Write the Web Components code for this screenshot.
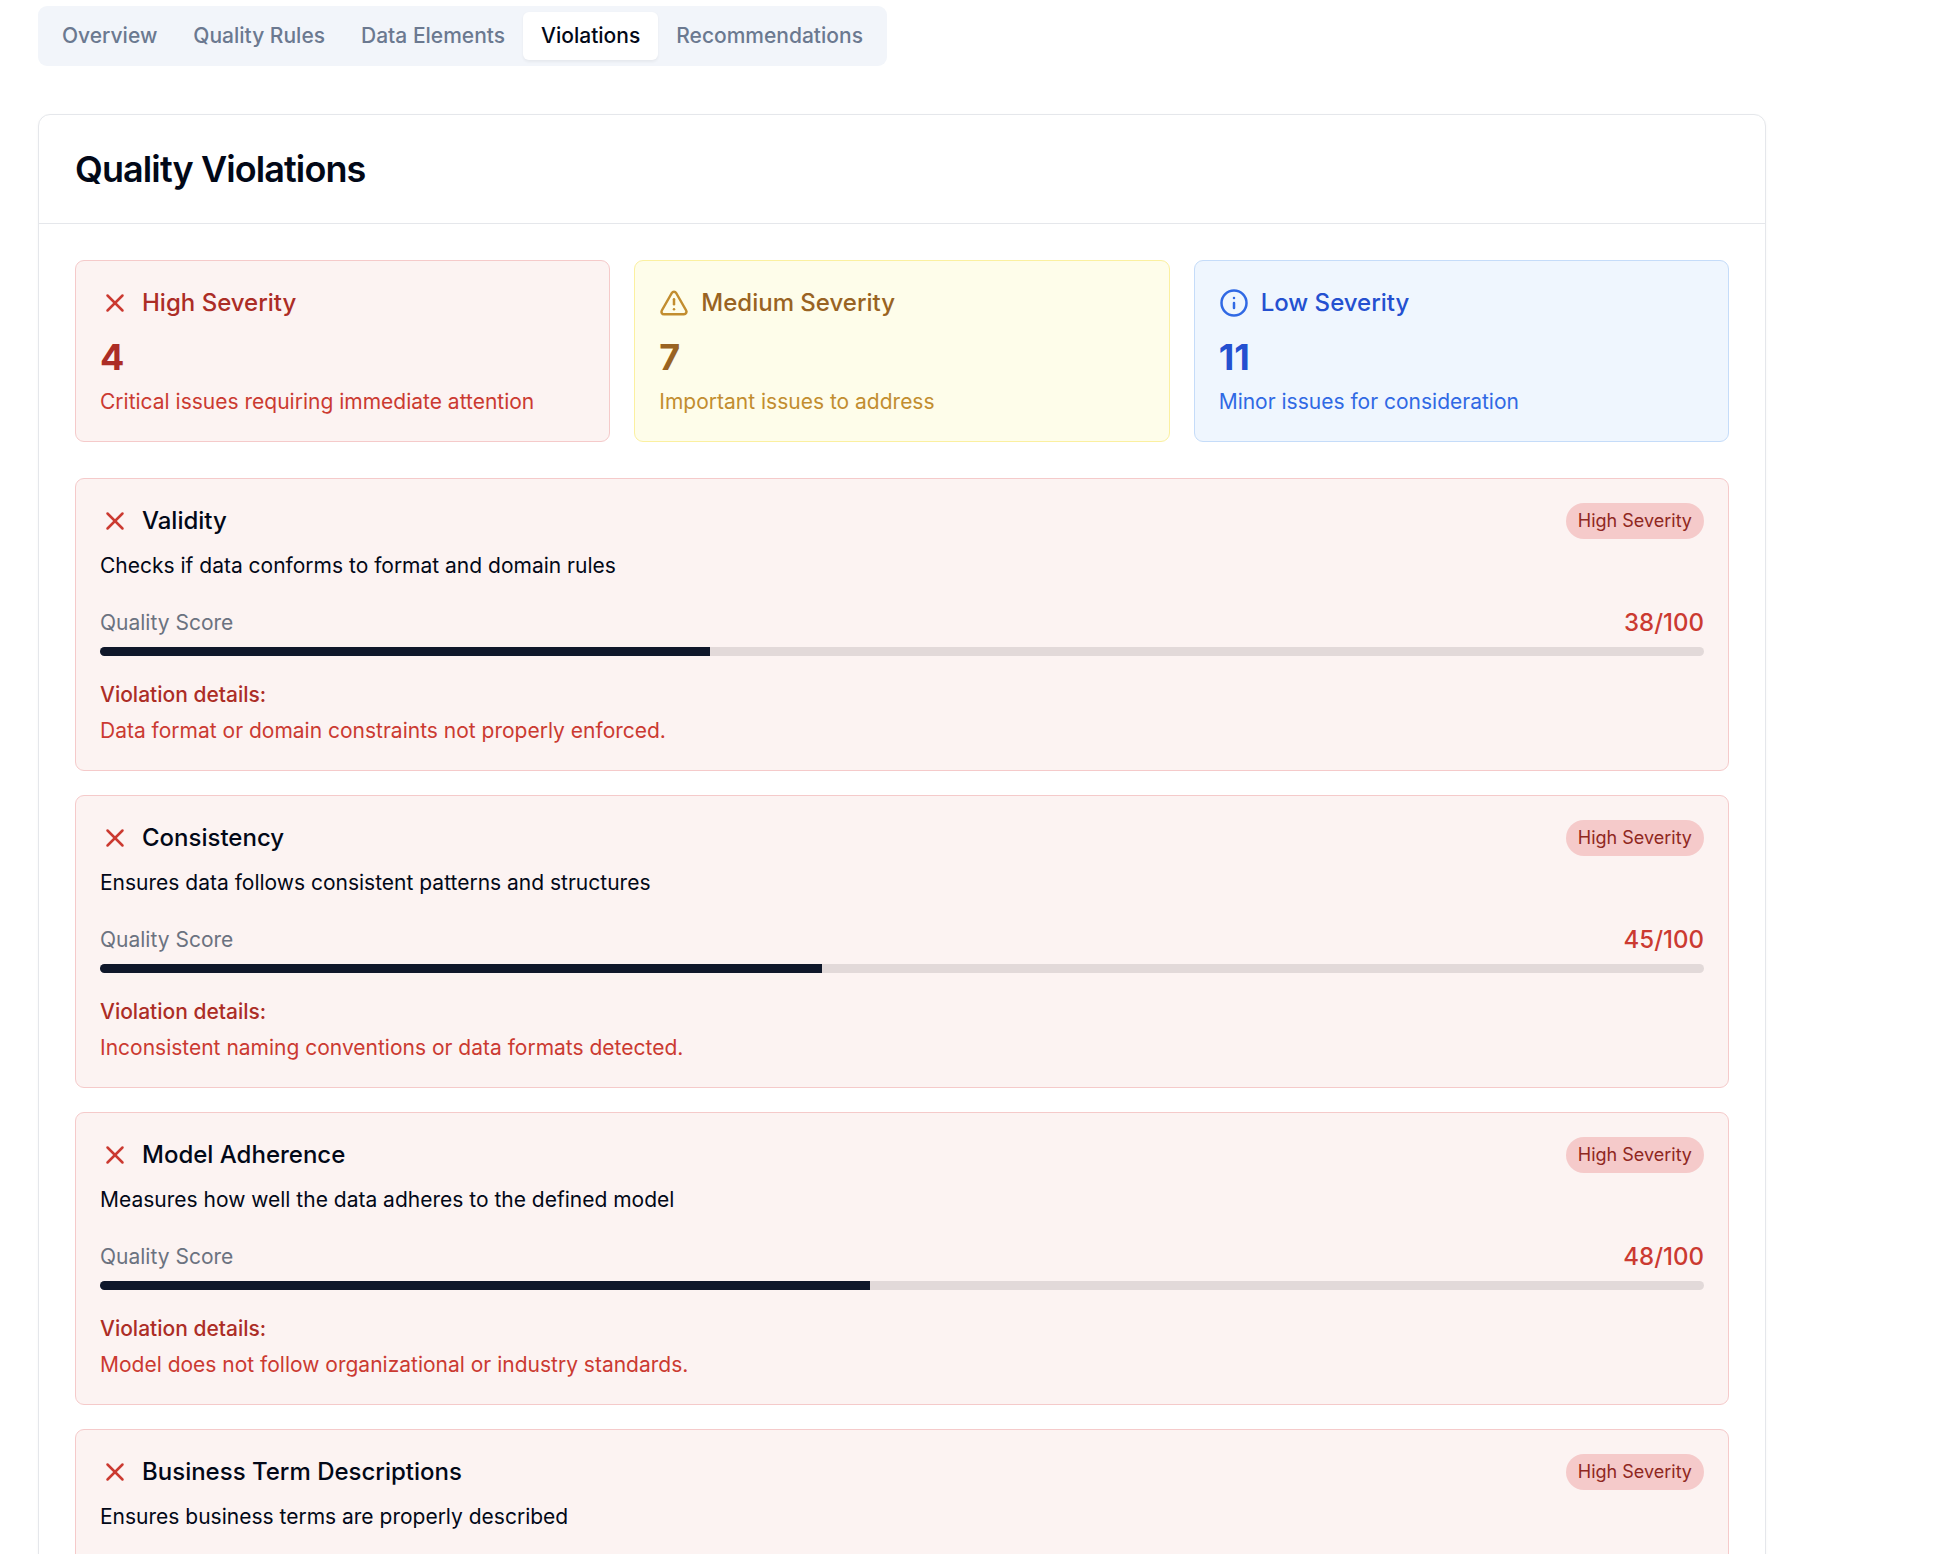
<!DOCTYPE html>
<html lang="en">
<head>
<meta charset="utf-8">
<title>Quality Violations</title>
<style>
html{overflow:hidden}
body{margin:0;background:#fff;color:#020817;font-family:Inter,"Liberation Sans",sans-serif;font-size:21px;line-height:30px;-webkit-font-smoothing:antialiased}
</style>
</head>
<body>
<quality-page></quality-page>
<script>
const define = (name, html, init) => {
  const tpl = document.createElement('template');
  tpl.innerHTML = html;
  customElements.define(name, class extends HTMLElement {
    connectedCallback() {
      if (this.shadowRoot) return;
      this.attachShadow({ mode: 'open' }).append(tpl.content.cloneNode(true));
      if (init) init(this, this.shadowRoot);
    }
  });
};

const ICONS = {
  high: '<path d="M18 6 6 18"/><path d="m6 6 12 12"/>',
  medium: '<path d="m21.73 18-8-14a2 2 0 0 0-3.48 0l-8 14A2 2 0 0 0 4 21h16a2 2 0 0 0 1.73-3Z"/><path d="M12 9v4"/><path d="M12 17h.01"/>',
  low: '<circle cx="12" cy="12" r="10"/><path d="M12 16v-4"/><path d="M12 8h.01"/>'
};

define('severity-icon', `<style>
:host{display:block;flex:none;width:30px;height:30px}
:host([level=high]){color:#cb3a31}
:host([level=medium]){color:#c28d2f}
:host([level=low]){color:#3069e4}
svg{display:block;width:30px;height:30px;fill:none;stroke:currentColor;stroke-width:2;stroke-linecap:round;stroke-linejoin:round}
</style><svg viewBox="0 0 24 24"></svg>`, (el, root) => {
  root.querySelector('svg').innerHTML = ICONS[el.getAttribute('level')];
});

define('tab-item', `<style>
:host{display:block;padding:9px 18px;border-radius:6px;font-weight:500;color:#6b7990;white-space:nowrap}
:host([active]){background:#fff;color:#020817;box-shadow:0 1.5px 3px rgba(0,0,0,.05)}
</style><slot></slot>`);

define('tab-bar', `<style>
:host{display:inline-flex;box-sizing:border-box;height:60px;padding:6px;border-radius:9px;background:#f2f5fa}
</style><slot></slot>`);

define('panel-card', `<style>
:host{display:block;border:1px solid #e5e7eb;border-radius:12px;background:#fff;box-shadow:0 1px 3px rgba(0,0,0,.04)}
header{padding:36px;border-bottom:1px solid #e5e7eb}
h2{margin:0;font-size:36px;line-height:36px;font-weight:600;letter-spacing:-.9px}
main{display:flex;flex-direction:column;gap:36px;padding:36px}
</style><header><h2><slot name="title"></slot></h2></header><main><slot></slot></main>`);

define('severity-grid', `<style>
:host{display:grid;grid-template-columns:repeat(3,1fr);gap:24px}
</style><slot></slot>`);

define('severity-card', `<style>
:host{display:block;padding:24px;border:1px solid;border-radius:9px}
:host([level=high]){background:#fcf3f2;border-color:#f5caca;--strong:#ac2d26;--soft:#cb3a31}
:host([level=medium]){background:#fefdea;border-color:#fbf0a0;--strong:#996322;--soft:#c28d2f}
:host([level=low]){background:#eff6fe;border-color:#c5dcf9;--strong:#2450d0;--soft:#3069e4}
.head{display:flex;align-items:center;gap:12px;margin-bottom:12px}
h3{margin:0;font-size:24px;line-height:36px;font-weight:500;color:var(--strong)}
.count{font-size:36px;line-height:48px;font-weight:700;color:var(--strong)}
.note{margin-top:6px;color:var(--soft)}
</style><div class="head"><severity-icon></severity-icon><h3><slot name="title"></slot></h3></div>
<div class="count"><slot name="count"></slot></div><div class="note"><slot></slot></div>`, (el, root) => {
  const icon = document.createElement('severity-icon');
  icon.setAttribute('level', el.getAttribute('level'));
  root.querySelector('severity-icon').replaceWith(icon);
});

define('severity-badge', `<style>
:host{display:block;padding:6px 12px;border-radius:18px;background:#f5caca;color:#8f2721;font-size:18px;line-height:24px}
</style><slot></slot>`);

define('score-bar', `<style>
:host{display:block;height:9px;border-radius:9px;background:#e2d9d9;overflow:hidden}
div{height:100%;background:#0f172a}
</style><div></div>`, (el, root) => {
  root.querySelector('div').style.width = el.getAttribute('value') + '%';
});

define('violation-list', `<style>
:host{display:flex;flex-direction:column;gap:24px}
</style><slot></slot>`);

define('violation-card', `<style>
:host{display:block;box-sizing:border-box;min-height:293px;padding:24px;border:1px solid #f5caca;border-radius:9px;background:#fcf3f2}
.row{display:flex;align-items:center;justify-content:space-between}
.name{display:flex;align-items:center;gap:12px}
h3{margin:0;font-size:24px;line-height:36px;font-weight:500}
p{margin:0}
.about{margin:12px 0 24px}
.label{color:#6b7280}
.score{font-size:24px;line-height:36px;font-weight:500;color:#cb3a31}
score-bar{margin:6px 0 24px}
.details{font-weight:500;color:#ac2d26}
.message{margin-top:6px;color:#cb3a31}
</style>
<div class="row"><div class="name"><severity-icon level="high"></severity-icon><h3><slot name="title"></slot></h3></div><severity-badge>High Severity</severity-badge></div>
<p class="about"><slot name="about"></slot></p>
<section>
<div class="row"><span class="label">Quality Score</span><span class="score"></span></div>
<score-bar></score-bar>
<p class="details">Violation details:</p>
<p class="message"><slot></slot></p>
</section>`, (el, root) => {
  const score = el.getAttribute('score');
  if (score === null) {
    root.querySelector('section').remove();
    return;
  }
  root.querySelector('.score').textContent = score + '/100';
  const bar = document.createElement('score-bar');
  bar.setAttribute('value', score);
  root.querySelector('score-bar').replaceWith(bar);
});

define('quality-page', `<style>
:host{display:block;box-sizing:border-box;height:1554px;overflow:hidden;padding:6px 0 0 38px}
tab-bar{vertical-align:top}
panel-card{width:1726px;margin-top:48px}
</style>
<tab-bar><tab-item>Overview</tab-item><tab-item>Quality Rules</tab-item><tab-item>Data Elements</tab-item><tab-item active>Violations</tab-item><tab-item>Recommendations</tab-item></tab-bar>
<panel-card><span slot="title">Quality Violations</span>
<severity-grid>
<severity-card level="high"><span slot="title">High Severity</span><span slot="count">4</span>Critical issues requiring immediate attention</severity-card>
<severity-card level="medium"><span slot="title">Medium Severity</span><span slot="count">7</span>Important issues to address</severity-card>
<severity-card level="low"><span slot="title">Low Severity</span><span slot="count">11</span>Minor issues for consideration</severity-card>
</severity-grid>
<violation-list>
<violation-card score="38"><span slot="title">Validity</span><span slot="about">Checks if data conforms to format and domain rules</span>Data format or domain constraints not properly enforced.</violation-card>
<violation-card score="45"><span slot="title">Consistency</span><span slot="about">Ensures data follows consistent patterns and structures</span>Inconsistent naming conventions or data formats detected.</violation-card>
<violation-card score="48"><span slot="title">Model Adherence</span><span slot="about">Measures how well the data adheres to the defined model</span>Model does not follow organizational or industry standards.</violation-card>
<violation-card><span slot="title">Business Term Descriptions</span><span slot="about">Ensures business terms are properly described</span></violation-card>
</violation-list>
</panel-card>`);
</script>
</body>
</html>
